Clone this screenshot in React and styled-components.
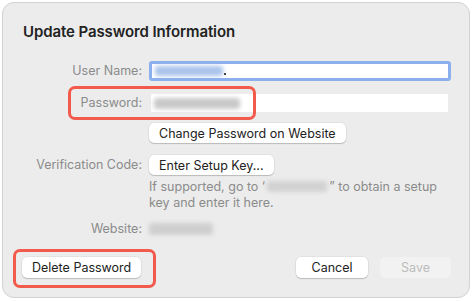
import styled, { createGlobalStyle } from 'styled-components';

const GlobalStyle = createGlobalStyle`
  body {
    margin: 0;
    background: #ffffff;
    font-family: Inter, "Liberation Sans", sans-serif;
  }
`;

const Dialog = styled.div`
  position: relative;
  box-sizing: border-box;
  width: 468px;
  height: 296px;
  margin: 2px;
  padding: 19px 18px 0 20px;
  background: #ececec;
  border: 1px solid #d2d2d2;
  border-radius: 12px;
  display: flex;
  flex-direction: column;
`;

const Title = styled.div`
  font-size: 15px;
  font-weight: 600;
  line-height: 19px;
  color: #222222;
  letter-spacing: -0.1px;
`;

const Form = styled.div`
  display: grid;
  grid-template-columns: 119px 1fr;
  column-gap: 7px;
  margin-top: 20px;
`;

const Label = styled.div`
  font-size: 12.5px;
  line-height: 20px;
  height: 20px;
  color: #8b8b8b;
  text-align: right;
  margin-top: ${(p) => p.$top || 0}px;
`;

const Cell = styled.div`
  margin-top: ${(p) => p.$top || 0}px;
  display: flex;
  flex-direction: column;
  align-items: flex-start;
`;

const Field = styled.div`
  box-sizing: border-box;
  width: 302px;
  height: 20px;
  display: flex;
  align-items: center;
  padding-left: 3px;
  background: #ffffff;
  border-radius: 3px;
  border: 3px solid ${(p) => (p.$focused ? '#8cb0ee' : 'transparent')};
  ${(p) => (p.$focused ? '' : 'border-width: 1px 3px 1px 2px; background-clip: padding-box;')}
`;

const Blur = styled.span`
  display: inline-block;
  width: ${(p) => p.$w}px;
  height: ${(p) => p.$h || 11}px;
  background: ${(p) => p.$color};
  filter: blur(2px);
  border-radius: 3px;
  vertical-align: middle;
`;

const Caret = styled.span`
  display: inline-block;
  width: 1.5px;
  height: 2px;
  margin-left: 1px;
  margin-top: 6px;
  background: #333;
`;

const Button = styled.button`
  box-sizing: border-box;
  height: ${(p) => p.$h || 20}px;
  padding: 0 ${(p) => p.$pad || 10}px;
  min-width: ${(p) => p.$min || 0}px;
  font-family: Inter, "Liberation Sans", sans-serif;
  font-size: 12.5px;
  color: ${(p) => (p.$disabled ? '#bdbdbd' : '#222222')};
  background: ${(p) => (p.$disabled ? '#f2f2f2' : '#ffffff')};
  border: none;
  border-radius: 5px;
  box-shadow: ${(p) =>
    p.$disabled ? 'none' : '0 0 0 0.5px rgba(0,0,0,0.08), 0 1px 1px rgba(0,0,0,0.18)'};
  cursor: default;
`;

const Help = styled.div`
  margin-top: 4px;
  font-size: 12.5px;
  line-height: 16px;
  color: #8b8b8b;
  width: 300px;
`;

const InlineBlur = styled(Blur)`
  vertical-align: -1px;
  margin: 0 2px;
`;

const Value = styled.div`
  height: 20px;
  display: flex;
  align-items: center;
`;

const Footer = styled.div`
  display: flex;
  align-items: center;
  margin-top: 18px;
  gap: 12px;
`;

const Spacer = styled.div`
  flex: 1;
`;

const Highlight = styled.div`
  position: absolute;
  left: ${(p) => p.$x}px;
  top: ${(p) => p.$y}px;
  width: ${(p) => p.$w}px;
  height: ${(p) => p.$h}px;
  box-sizing: border-box;
  border: 3px solid #f25a4b;
  border-radius: 7px;
  pointer-events: none;
`;

export default function App() {
  return (
    <>
      <GlobalStyle />
      <Dialog>
        <Title>Update Password Information</Title>
        <Form>
          <Label>User Name:</Label>
          <Cell>
            <Field $focused>
              <Blur $w={68} $h={10} $color="#a9c3ea" />
              <Caret />
            </Field>
          </Cell>

          <Label $top={12}>Password:</Label>
          <Cell $top={12}>
            <Field>
              <Blur $w={86} $h={11} $color="#c9c9c9" />
            </Field>
          </Cell>

          <div />
          <Cell $top={10}>
            <Button>Change Password on Website</Button>
          </Cell>

          <Label $top={12}>Verification Code:</Label>
          <Cell $top={12}>
            <Button>Enter Setup Key...</Button>
            <Help>
              If supported, go to ‘<InlineBlur $w={60} $h={11} $color="#d2d2d2" />” to obtain a setup key and enter it here.
            </Help>
          </Cell>

          <Label $top={8}>Website:</Label>
          <Cell $top={8}>
            <Value>
              <Blur $w={64} $h={12} $color="#cfcfcf" />
            </Value>
          </Cell>
        </Form>
        <Footer>
          <Button $h={21} $pad={10} style={{ marginLeft: -1 }}>Delete Password</Button>
          <Spacer />
          <Button $h={21} $min={72}>Cancel</Button>
          <Button $h={21} $min={71} $disabled>Save</Button>
        </Footer>
        <Highlight $x={65} $y={83} $w={188} $h={34} />
        <Highlight $x={10} $y={246} $w={143} $h={39} />
      </Dialog>
    </>
  );
}
